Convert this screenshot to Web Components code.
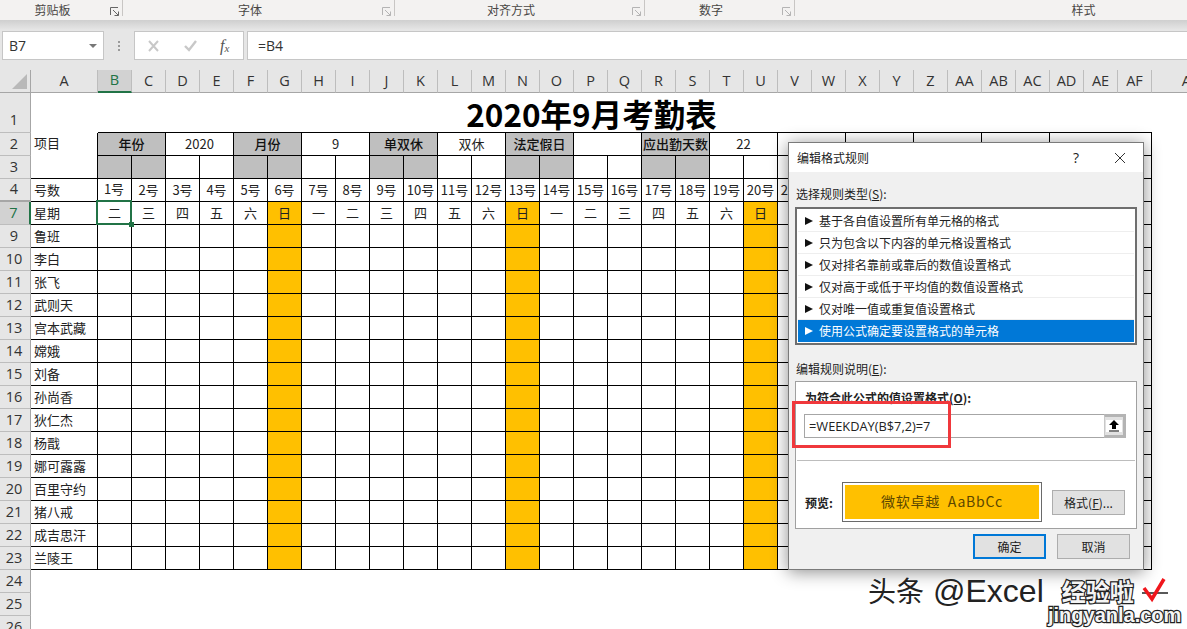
<!DOCTYPE html>
<html lang="zh">
<head>
<meta charset="utf-8">
<title>2020年9月考勤表</title>
<style>
html, body { margin: 0; padding: 0; overflow: hidden; background: #fff; }
body { font-family: "Noto Sans CJK SC", "Liberation Sans", sans-serif; font-size: 12px; color: #222; }
</style>
</head>
<body>
<xl-app>
  <xl-ribbon slot="top">
    <xl-ribbon-group size="123" strong>剪贴板</xl-ribbon-group>
    <xl-ribbon-group size="272">字体</xl-ribbon-group>
    <xl-ribbon-group size="250">对齐方式</xl-ribbon-group>
    <xl-ribbon-group size="150">数字</xl-ribbon-group>
    <xl-ribbon-group size="578" plain>样式</xl-ribbon-group>
  </xl-ribbon>
  <xl-formula-bar name="B7" formula="=B4"></xl-formula-bar>
  <xl-sheet></xl-sheet>
  <xl-dialog heading="编辑格式规则">
    <xl-rule-item>基于各自值设置所有单元格的格式</xl-rule-item>
    <xl-rule-item>只为包含以下内容的单元格设置格式</xl-rule-item>
    <xl-rule-item>仅对排名靠前或靠后的数值设置格式</xl-rule-item>
    <xl-rule-item>仅对高于或低于平均值的数值设置格式</xl-rule-item>
    <xl-rule-item>仅对唯一值或重复值设置格式</xl-rule-item>
    <xl-rule-item selected>使用公式确定要设置格式的单元格</xl-rule-item>
    <xl-button slot="format" wide>格式(<u>F</u>)...</xl-button>
    <xl-button slot="ok" primary>确定</xl-button>
    <xl-button slot="cancel">取消</xl-button>
  </xl-dialog>
  <xl-watermark></xl-watermark>
</xl-app>

<script>
class XlApp extends HTMLElement {
    constructor() {
        super();
        this.shadowDOM = this.attachShadow({mode: "open"});
    }
    connectedCallback() {
        this.shadowDOM.innerHTML = `
        <style>
        :host {
            display: flex;
            flex-direction: column;
            position: relative;
            width: 1187px;
            height: 629px;
            overflow: hidden;
            background: #fff;
        }
        </style>
        <slot name="top"></slot>
        <slot></slot>
        `;
    }
}

class XlRibbon extends HTMLElement {
    constructor() {
        super();
        this.shadowDOM = this.attachShadow({mode: "open"});
    }
    connectedCallback() {
        this.shadowDOM.innerHTML = `
        <style>
        :host {
            display: flex;
            flex: none;
            height: 20px;
            background: #f3f2f1;
            overflow: hidden;
        }
        </style>
        <slot></slot>
        `;
    }
}

class XlRibbonGroup extends HTMLElement {
    constructor() {
        super();
        this.shadowDOM = this.attachShadow({mode: "open"});
    }
    connectedCallback() {
        const size = this.getAttribute("size");
        const strong = this.hasAttribute("strong");
        const plain = this.hasAttribute("plain");
        const stroke = strong ? "#666" : "#b4b4b4";
        const launcher = plain ? "" : `
        <svg viewBox="0 0 10 10" width="10" height="10">
            <path d="M.5 8V.5H8" fill="none" stroke="${stroke}"/>
            <path d="M3 3L8.5 8.5M8.5 4.5v4h-4" fill="none" stroke="${stroke}"/>
        </svg>`;
        this.shadowDOM.innerHTML = `
        <style>
        :host {
            display: flex;
            flex: none;
            box-sizing: border-box;
            width: ${size}px;
            height: 16px;
            position: relative;
            border-right: 1px solid #c8c6c4;
            padding-right: ${plain ? 0 : 17}px;
            justify-content: center;
            align-items: center;
            font-size: 12px;
            color: #484644;
            margin-bottom: 4px;
        }
        .label { margin-top: 3px; }
        svg { position: absolute; right: 2px; top: 7px; }
        </style>
        <span class="label"><slot></slot></span>
        ${launcher}
        `;
    }
}

class XlFormulaBar extends HTMLElement {
    constructor() {
        super();
        this.shadowDOM = this.attachShadow({mode: "open"});
    }
    connectedCallback() {
        this.shadowDOM.innerHTML = `
        <style>
        :host {
            display: flex;
            flex: none;
            box-sizing: border-box;
            height: 50px;
            padding: 11px 0 10px 2px;
            align-items: stretch;
            background: linear-gradient(#cfcfcf 0, #e6e6e6 10px);
            font-family: "Open Sans", "Noto Sans CJK SC", sans-serif;
            font-size: 14px;
            color: #333;
        }
        .box {
            box-sizing: border-box;
            display: flex;
            align-items: center;
            background: #fff;
            border: 1px solid #c6c6c6;
        }
        .name { width: 102px; padding: 0 6px; justify-content: space-between; }
        .name i { width: 0; height: 0; border: 4px solid transparent; border-top: 4px solid #777; border-bottom: 0; }
        .dots { width: 30px; display: flex; flex-direction: column; gap: 2px; align-items: center; justify-content: center; }
        .dots b { width: 2px; height: 2px; background: #9a9a9a; }
        .buttons { width: 110px; margin-right: 3px; padding-left: 12px; gap: 24px; }
        .fx { font: italic 16px "Liberation Serif", serif; color: #555; margin-left: -1px; }
        .fx sub { font-size: 11px; vertical-align: -1px; }
        .input { flex: 1; padding-left: 10px; margin-right: -1px; }
        </style>
        <div class="box name"><span>${this.getAttribute("name")}</span><i></i></div>
        <div class="dots"><b></b><b></b><b></b></div>
        <div class="box buttons">
            <svg width="13" height="12" viewBox="0 0 13 12"><path d="M2 1l9 10M11 1L2 11" stroke="#c8c8c8" stroke-width="2" fill="none"/></svg>
            <svg width="13" height="12" viewBox="0 0 13 12"><path d="M1 6l4 4 7-9" stroke="#c8c8c8" stroke-width="2.4" fill="none"/></svg>
            <span class="fx">f<sub>x</sub></span>
        </div>
        <div class="box input">${this.getAttribute("formula")}</div>
        `;
    }
}

class XlSheet extends HTMLElement {
    constructor() {
        super();
        this.shadowDOM = this.attachShadow({mode: "open"});
    }

    connectedCallback() {
        this.render();
    }

    columnName(i) {
        if (i < 26) return String.fromCharCode(65 + i);
        return "A" + String.fromCharCode(65 + i - 26);
    }

    cell(col, row, text, cls, span) {
        const colSpan = span || 1;
        return `<div class="${cls}" style="grid-column:${col}/span ${colSpan};grid-row:${row}">${text}</div>`;
    }

    render() {
        const rowNames = [1, 2, 3, 4, 7, 9, 10, 11, 12, 13, 14, 15, 16, 17, 18, 19, 20, 21, 22, 23, 24, 25, 26];
        const people = ["鲁班", "李白", "张飞", "武则天", "宫本武藏", "嫦娥", "刘备", "孙尚香", "狄仁杰", "杨戬", "娜可露露", "百里守约", "猪八戒", "成吉思汗", "兰陵王"];
        const heads = [
            ["年份", 1], ["2020", 0], ["月份", 1], ["9", 0], ["单双休", 1], ["双休", 0], ["法定假日", 1], ["", 0],
            ["应出勤天数", 1], ["22", 0], ["", 0], ["", 0], ["", 0], ["", 0], ["", 0]
        ];
        const week = ["二", "三", "四", "五", "六", "日", "一"];
        const A = 2, B = 3, COLS = 31;
        // days after the 21st lie under the dialog
        const LAST_DAY = 21, LAST_WEEKDAY = 20;
        let html = `<div class="corner" style="grid-column:1;grid-row:1"><svg width="16" height="15"><path d="M15 0v15H0z" fill="#b9b9b9"/></svg></div>`;

        // column letters
        for (let i = 0; i < 33; i++) {
            html += this.cell(i + 2, 1, this.columnName(i), "col-head" + (i === 1 ? " active" : ""));
        }

        // row numbers
        rowNames.forEach((name, i) => {
            let cls = "row-head";
            if (name === 7) cls += " active";
            if (name === 4) cls += " before-hidden";
            if (name === 1) cls += " tall";
            html += this.cell(1, i + 2, name, cls);
        });

        // row 1: title over the whole width, the table's top edge starts at B
        html += `<div class="top-edge" style="grid-column:${B}/span ${COLS};grid-row:2"></div>`;
        html += `<div class="title" style="grid-column:${A}/span ${COLS + 1};grid-row:2">2020年9月考勤表</div>`;

        // rows 2 and 3
        html += `<div class="c left project" style="grid-column:${A};grid-row:3/span 2">项目</div>`;
        let col = B;
        heads.forEach((h, i) => {
            const span = i === heads.length - 1 ? 3 : 2;
            html += this.cell(col, 3, h[0], "c" + (h[1] ? " grey strong" : ""), span);
            for (let k = 0; k < span; k++) {
                html += this.cell(col + k, 4, "", "c" + (h[1] ? " grey" : ""));
            }
            col += span;
        });

        // row 4 and 7
        html += this.cell(A, 5, "号数", "c left");
        html += this.cell(A, 6, "星期", "c left");
        for (let d = 0; d < COLS; d++) {
            const day = d < LAST_DAY ? (d + 1) + "号" : "";
            html += this.cell(B + d, 5, day, "c" + (d === 0 ? " first-day" : ""));
            const w = week[d % 7];
            const sun = d < 30 && w === "日";
            let text = d < LAST_WEEKDAY ? w : "";
            if (d === 0) text += '<span class="selection"></span><span class="handle"></span>';
            html += this.cell(B + d, 6, text, "c" + (sun ? " sun" : ""));
        }

        // people
        people.forEach((p, r) => {
            html += this.cell(A, 7 + r, p, "c left");
            for (let d = 0; d < COLS; d++) {
                html += this.cell(B + d, 7 + r, "", "c" + (d < 30 && d % 7 === 5 ? " sun" : ""));
            }
        });

        this.shadowDOM.innerHTML = `
        <style>
        :host {
            display: grid;
            flex: none;
            grid-template-columns: 31px 67px repeat(31, 34px) 80px;
            grid-template-rows: 23px 40px repeat(22, 23px);
            background: #fff;
            font-size: 13px;
            color: #222;
        }
        .corner {
            background: #e6e6e6;
            border-right: 1px solid #a6a6a6;
            border-bottom: 1px solid #a6a6a6;
            box-sizing: border-box;
            display: flex;
            padding: 4px 0 0 12px;
        }
        .col-head, .row-head {
            box-sizing: border-box;
            display: flex;
            align-items: center;
            justify-content: center;
            background: #e6e6e6;
            font-family: "Open Sans", sans-serif;
            font-size: 14.5px;
            color: #333;
            line-height: 1;
        }
        .col-head {
            border-right: 1px solid #bdbdbd;
            border-bottom: 1px solid #a6a6a6;
        }
        .row-head {
            border-right: 1px solid #a6a6a6;
            border-bottom: 1px solid #bdbdbd;
            padding-right: 2px;
        }
        .row-head.tall { align-items: flex-end; padding-bottom: 5px; }
        .row-head.before-hidden { border-bottom: 2px solid #a6a6a6; }
        .col-head.active {
            background: #d2d2d2;
            color: #217346;
            border-bottom: 2px solid #217346;
        }
        .row-head.active {
            background: #d2d2d2;
            color: #217346;
            border-right: 2px solid #217346;
        }
        .title {
            display: flex;
            align-items: flex-end;
            justify-content: center;
            font-size: 31.5px;
            font-weight: 700;
            color: #000;
            line-height: 40px;
            box-sizing: border-box;
            z-index: 1;
        }
        .top-edge { border-bottom: 1px solid #000; }
        .c {
            box-sizing: border-box;
            display: flex;
            align-items: center;
            justify-content: center;
            border-right: 1px solid #000;
            border-bottom: 1px solid #000;
            padding-bottom: 1px;
            position: relative;
            white-space: nowrap;
            line-height: 1;
        }
        .left { justify-content: flex-start; padding-left: 3px; padding-bottom: 2px; }
        .project { align-items: flex-start; padding-top: 3px; }
        .grey { background: #bfbfbf; }
        .strong { font-weight: 500; color: #111; }
        .sun { background: #ffc000; }
        .first-day { padding-bottom: 3px; padding-right: 1px; }
        .selection {
            position: absolute;
            left: -2px; top: -2px; right: -1px; bottom: -1px;
            border: 2px solid #217346;
            z-index: 2;
        }
        .handle {
            position: absolute;
            right: -3px; bottom: -3px;
            width: 5px; height: 5px;
            background: #217346;
            z-index: 3;
        }
        </style>
        ${html}
        `;
    }
}

class XlRuleItem extends HTMLElement {
    constructor() {
        super();
        this.shadowDOM = this.attachShadow({mode: "open"});
    }
    connectedCallback() {
        const on = this.hasAttribute("selected");
        this.shadowDOM.innerHTML = `
        <style>
        :host {
            display: flex;
            box-sizing: border-box;
            height: 22px;
            align-items: center;
            gap: 6px;
            padding-left: 7px;
            font-size: 12px;
            color: ${on ? "#fff" : "#222"};
            background: ${on ? "#0078d7" : "#fff"};
            border-bottom: 1px solid ${on ? "#0078d7" : "#eeeeee"};
        }
        svg { flex: none; }
        </style>
        <svg width="8" height="8" viewBox="0 0 8 8"><path d="M0 0l8 4-8 4z" fill="${on ? "#fff" : "#111"}"/></svg>
        <slot></slot>
        `;
    }
}

class XlButton extends HTMLElement {
    constructor() {
        super();
        this.shadowDOM = this.attachShadow({mode: "open"});
    }
    connectedCallback() {
        const primary = this.hasAttribute("primary");
        this.shadowDOM.innerHTML = `
        <style>
        :host {
            display: flex;
            box-sizing: border-box;
            width: 73px;
            height: 25px;
            align-items: center;
            justify-content: center;
            font-size: 12px;
            color: #222;
            background: #e1e1e1;
            border: ${primary ? "2px solid #0078d7" : "1px solid #adadad"};
        }
        </style>
        <slot></slot>
        `;
    }
}

class XlDialog extends HTMLElement {
    constructor() {
        super();
        this.shadowDOM = this.attachShadow({mode: "open"});
    }
    connectedCallback() {
        this.shadowDOM.innerHTML = `
        <style>
        :host {
            display: block;
            position: absolute;
            left: 788px;
            top: 142px;
            width: 356px;
            height: 428px;
            box-sizing: border-box;
            background: #f0f0f0;
            border: 1px solid #7a7a7a;
            box-shadow: 0 2px 16px rgba(0,0,0,.45);
            font-size: 12px;
            color: #222;
        }
        .titlebar {
            display: flex;
            align-items: center;
            height: 29px;
            background: #fff;
            padding-left: 8px;
        }
        .titlebar .text { flex: 1; }
        .help { font: 14px "Open Sans", sans-serif; margin-right: 36px; }
        .close { margin-right: 18px; }
        .body { padding: 0 6px 0 6px; }
        .label { height: 35px; box-sizing: border-box; padding: 11px 0 0 1px; line-height: 22px; }
        .label.second { height: 36px; padding-top: 13px; }
        .list {
            box-sizing: border-box;
            height: 138px;
            border: 2px solid #6e6e6e;
            padding: 1px;
            background: #fff;
        }
        .group {
            box-sizing: border-box;
            height: 148px;
            background: #fff;
            border: 1px solid #a0a0a0;
        }
        .rule-label { font-weight: 700; line-height: 32px; height: 32px; padding-left: 9px; }
        .input-row { display: flex; height: 24px; margin-left: 8px; margin-right: 10px; }
        .input {
            flex: 1;
            box-sizing: border-box;
            border: 1px solid #a6a6a6;
            border-right: 0;
            padding-left: 4px;
            display: flex;
            align-items: center;
            font-family: "Open Sans", sans-serif;
            font-size: 12.8px;
            color: #222;
        }
        .ref {
            flex: none;
            box-sizing: border-box;
            width: 22px;
            background: #e1e1e1;
            border: 3px solid #b4b4b4;
            border-left: 1px solid #c8c8c8;
            padding: 3px 1px;
            display: flex;
        }
        .ref span { flex: 1; background: #fff; display: flex; align-items: center; justify-content: center; }
        .sep { height: 1px; background: #bdbdbd; margin: 22px 1px 21px; }
        .preview-row { display: flex; align-items: center; height: 40px; padding-left: 9px; }
        .preview-label { width: 37px; font-weight: 700; flex: none; }
        .preview {
            box-sizing: border-box;
            flex: none;
            width: 200px;
            height: 40px;
            border: 1px solid #6a6a6a;
            padding: 2px;
            margin-right: 10px;
        }
        .preview div {
            box-sizing: border-box;
            height: 100%;
            background: #ffc000;
            display: flex;
            align-items: center;
            justify-content: center;
            padding-bottom: 3px;
            font-size: 14px;
            color: #5c4700;
            letter-spacing: .75px;
            white-space: pre;
        }
        .footer { display: flex; justify-content: flex-end; gap: 11px; padding: 5px 7px 0 0; }
        .marker {
            position: absolute;
            left: 3px;
            top: 258px;
            width: 159px;
            height: 47px;
            box-sizing: border-box;
            border: 3px solid #f0383c;
        }
        </style>
        <div class="titlebar">
            <span class="text">${this.getAttribute("heading")}</span>
            <span class="help">?</span>
            <svg class="close" width="10" height="10" viewBox="0 0 10 10"><path d="M0 0l10 10M10 0L0 10" stroke="#333" fill="none"/></svg>
        </div>
        <div class="body">
            <div class="label">选择规则类型(<u>S</u>):</div>
            <div class="list"><slot></slot></div>
            <div class="label second">编辑规则说明(<u>E</u>):</div>
            <div class="group">
                <div class="rule-label">为符合此公式的值设置格式(<u>O</u>):</div>
                <div class="input-row">
                    <div class="input">=WEEKDAY(B$7,2)=7</div>
                    <div class="ref"><span><svg width="12" height="12" viewBox="0 0 12 12"><path d="M6 0l5 5H8v4H4V5H1z" fill="#000"/><path d="M1 11h10" stroke="#000"/></svg></span></div>
                </div>
                <div class="sep"></div>
                <div class="preview-row">
                    <span class="preview-label">预览:</span>
                    <div class="preview"><div>微软卓越  AaBbCc</div></div>
                    <slot name="format"></slot>
                </div>
            </div>
            <div class="footer">
                <slot name="ok"></slot>
                <slot name="cancel"></slot>
            </div>
        </div>
        <div class="marker"></div>
        `;
    }
}

class XlWatermark extends HTMLElement {
    constructor() {
        super();
        this.shadowDOM = this.attachShadow({mode: "open"});
    }
    connectedCallback() {
        this.shadowDOM.innerHTML = `
        <style>
        :host {
            display: block;
            position: absolute;
            left: 868px;
            top: 572px;
            width: 310px;
            height: 56px;
            color: #222;
            line-height: 1;
            white-space: nowrap;
        }
        .line { display: flex; align-items: center; height: 38px; }
        .head { font-size: 28px; text-shadow: 1px 1px 0 #fff; }
        .head .latin { font-family: "Liberation Sans", sans-serif; font-weight: 400; font-size: 32px; margin-left: 9px; }
        .brand {
            font-size: 24px;
            font-weight: 700;
            margin-left: 18px;
            color: #f4f4f4;
            -webkit-text-stroke: 2.4px #222;
            paint-order: stroke fill;
        }
        .site {
            position: absolute;
            left: 180px;
            top: 32px;
            font: 700 20px "Liberation Sans", sans-serif;
            color: #f4f4f4;
            -webkit-text-stroke: 2.4px #222;
            paint-order: stroke fill;
        }
        svg { position: absolute; left: 274px; top: 5px; }
        </style>
        <div class="line"><span class="head">头条<span class="latin">@Excel</span></span><span class="brand">经验啦</span></div>
        <div class="site">jingyanla.com</div>
        <svg width="28" height="28" viewBox="0 0 28 28"><path d="M0 16h26" stroke="#222" stroke-width="1.5"/><path d="M2 11l8 11L22 2" fill="none" stroke="#f0161c" stroke-width="3.5"/></svg>
        `;
    }
}

customElements.define("xl-app", XlApp);
customElements.define("xl-ribbon", XlRibbon);
customElements.define("xl-ribbon-group", XlRibbonGroup);
customElements.define("xl-formula-bar", XlFormulaBar);
customElements.define("xl-sheet", XlSheet);
customElements.define("xl-rule-item", XlRuleItem);
customElements.define("xl-button", XlButton);
customElements.define("xl-dialog", XlDialog);
customElements.define("xl-watermark", XlWatermark);
</script>
</body>
</html>
